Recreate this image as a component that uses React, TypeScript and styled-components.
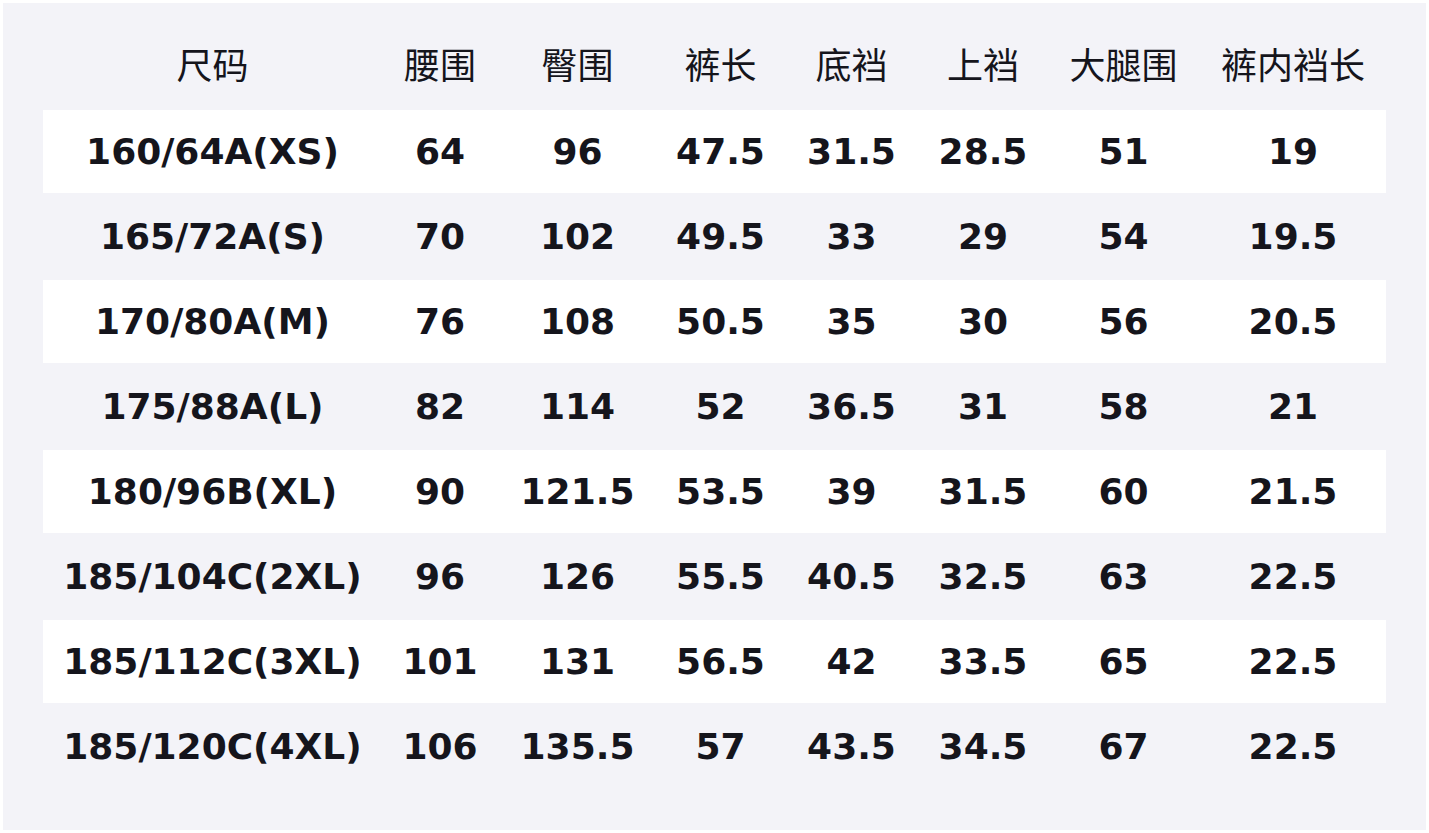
import React from "react";
import styled, { createGlobalStyle } from "styled-components";

const GlobalStyle = createGlobalStyle`
  html, body {
    margin: 0;
    padding: 0;
    background: #ffffff;
  }
  body {
    font-family: "DejaVu Sans", "Noto Sans CJK SC", sans-serif;
    color: #15151c;
  }
`;

const Panel = styled.div`
  margin: 3px;
  padding: 20px 40px 40px;
  background: #f3f3f8;
`;

const StyledTable = styled.table`
  width: 100%;
  table-layout: fixed;
  border-collapse: separate;
  border-spacing: 0 2px;
`;

const Col = styled.col<{ $width: number }>`
  width: ${(p) => p.$width}px;
`;

const Row = styled.tr<{ $striped: boolean }>`
  background: ${(p) => (p.$striped ? "#ffffff" : "transparent")};
`;

const HeadCell = styled.th`
  height: 83px;
  padding: 0;
  font-family: "DejaVu Sans", "Noto Sans CJK SC", sans-serif;
  font-size: 36px;
  font-weight: 400;
  line-height: 1.2;
  text-align: center;
  vertical-align: middle;
  white-space: nowrap;
`;

const Cell = styled.td`
  height: 83px;
  padding: 0;
  font-size: 36px;
  font-weight: 700;
  line-height: 1.2;
  text-align: center;
  vertical-align: middle;
  white-space: nowrap;
`;

const columnWidths = [339, 116, 159, 127, 135, 128, 153, 186];

const headers = ["尺码", "腰围", "臀围", "裤长", "底裆", "上裆", "大腿围", "裤内裆长"];

const sizes = [
  ["160/64A(XS)", "64", "96", "47.5", "31.5", "28.5", "51", "19"],
  ["165/72A(S)", "70", "102", "49.5", "33", "29", "54", "19.5"],
  ["170/80A(M)", "76", "108", "50.5", "35", "30", "56", "20.5"],
  ["175/88A(L)", "82", "114", "52", "36.5", "31", "58", "21"],
  ["180/96B(XL)", "90", "121.5", "53.5", "39", "31.5", "60", "21.5"],
  ["185/104C(2XL)", "96", "126", "55.5", "40.5", "32.5", "63", "22.5"],
  ["185/112C(3XL)", "101", "131", "56.5", "42", "33.5", "65", "22.5"],
  ["185/120C(4XL)", "106", "135.5", "57", "43.5", "34.5", "67", "22.5"],
];

const App = () => {
  return (
    <>
      <GlobalStyle />
      <Panel>
        <StyledTable>
          <colgroup>
            {columnWidths.map((w, i) => (
              <Col key={i} $width={w} />
            ))}
          </colgroup>
          <thead>
            <Row $striped={false}>
              {headers.map((h) => (
                <HeadCell key={h}>{h}</HeadCell>
              ))}
            </Row>
          </thead>
          <tbody>
            {sizes.map((row, i) => (
              <Row key={row[0]} $striped={i % 2 === 0}>
                {row.map((value, j) => (
                  <Cell key={j}>{value}</Cell>
                ))}
              </Row>
            ))}
          </tbody>
        </StyledTable>
      </Panel>
    </>
  );
};

export default App;
